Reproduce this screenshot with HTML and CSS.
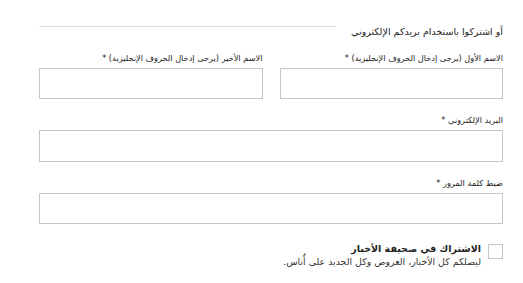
FILE: index.html
```html
<!DOCTYPE html>
<html lang="ar" dir="rtl">
<head>
<meta charset="utf-8">
<link rel="stylesheet" href="styles.css">
</head>
<body>
<form class="signup">
  <div class="heading">
    <span class="heading-text">أو اشتركوا باستخدام بريدكم الإلكتروني</span>
    <span class="heading-line"></span>
  </div>
  <div class="row two">
    <div class="field">
      <label class="label">الاسم الأول (يرجى إدخال الحروف الإنجليزية) *</label>
      <input class="input" type="text">
    </div>
    <div class="field">
      <label class="label">الاسم الأخير (يرجى إدخال الحروف الإنجليزية) *</label>
      <input class="input" type="text">
    </div>
  </div>
  <div class="row">
    <div class="field">
      <label class="label">البريد الإلكتروني *</label>
      <input class="input tall" type="text">
    </div>
  </div>
  <div class="row">
    <div class="field">
      <label class="label">ضبط كلمة المرور *</label>
      <input class="input" type="password">
    </div>
  </div>
  <div class="newsletter">
    <span class="checkbox"></span>
    <div class="nl-text">
      <div class="nl-title">الاشتراك في صحيفة الأخبار</div>
      <div class="nl-sub">ليصلكم كل الأخبار، العروض وكل الجديد على أُناس.</div>
    </div>
  </div>
</form>
</body>
</html>
```
FILE: styles.css
```css
html, body {
  margin: 0;
  padding: 0;
  background: #ffffff;
}
body {
  font-family: "DejaVu Sans", "Liberation Sans", sans-serif;
  color: #333333;
}
.signup {
  width: 464px;
  margin-right: 20px;
  padding-top: 20px;
  display: flex;
  flex-direction: column;
}
.heading {
  display: flex;
  align-items: center;
  gap: 15px;
  height: 18px;
  margin-bottom: 14px;
}
.heading-text {
  font-size: 9.5px;
  color: #222;
  white-space: nowrap;
  padding-top: 4px;
}
.heading-line {
  flex: 1;
  height: 1px;
  background: #dcdcdc;
  margin-bottom: 5px;
}
.row {
  display: flex;
  gap: 17px;
  margin-bottom: 15px;
}
.row.two .field {
  flex: 1;
}
.field {
  flex: 1;
  display: flex;
  flex-direction: column;
}
.label {
  font-size: 8.2px;
  line-height: 12px;
  color: #222;
  margin-bottom: 4px;
}
.input {
  box-sizing: border-box;
  height: 31px;
  border: 1px solid #c6c6c6;
  margin: 0;
  padding: 0 6px;
  background: #fff;
}
.input.tall {
  height: 32px;
}
.newsletter {
  display: flex;
  align-items: flex-start;
  gap: 7px;
  margin-top: 3px;
}
.checkbox {
  box-sizing: border-box;
  width: 15px;
  height: 15px;
  border: 1px solid #c6c6c6;
  margin-top: 2px;
}
.nl-title {
  font-size: 9.5px;
  line-height: 13px;
  color: #222;
  font-weight: bold;
}
.nl-sub {
  font-size: 9.4px;
  line-height: 13px;
  color: #333;
}
```
